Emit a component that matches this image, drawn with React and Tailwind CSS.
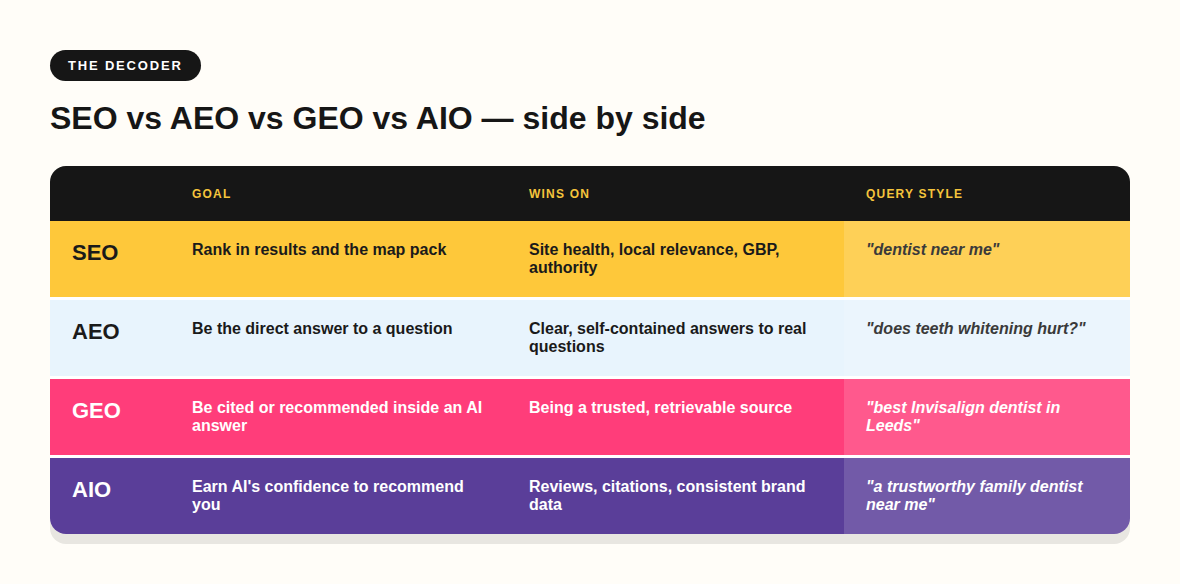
import React from 'react'

// ─── Rows of the decoder table ────────────────────────────────────────────────
const ROWS = [
  {
    label: 'SEO',
    goal: 'Rank in results and the map pack',
    wins: 'Site health, local relevance, GBP, authority',
    query: '"dentist near me"',
    bg: 'bg-[#fec83a]',
    text: 'text-[#1a1a1a]',
    queryText: 'text-[#3a3a3a]',
  },
  {
    label: 'AEO',
    goal: 'Be the direct answer to a question',
    wins: 'Clear, self-contained answers to real questions',
    query: '"does teeth whitening hurt?"',
    bg: 'bg-[#e8f4fd]',
    text: 'text-[#1a1a1a]',
    queryText: 'text-[#3a3a3a]',
  },
  {
    label: 'GEO',
    goal: 'Be cited or recommended inside an AI answer',
    wins: 'Being a trusted, retrievable source',
    query: '"best Invisalign dentist in Leeds"',
    bg: 'bg-[#ff3d7a]',
    text: 'text-white',
    queryText: 'text-white',
  },
  {
    label: 'AIO',
    goal: "Earn AI's confidence to recommend you",
    wins: 'Reviews, citations, consistent brand data',
    query: '"a trustworthy family dentist near me"',
    bg: 'bg-[#5a3e99]',
    text: 'text-white',
    queryText: 'text-white',
  },
]

const COLS = 'grid grid-cols-[120px_337px_337px_1fr]'

const Row = ({ row, first }) => (
  <div className={`${COLS} ${row.bg} ${row.text} ${first ? '' : 'border-t-[3px] border-white'}`}>
    <div className="pl-[22px] pt-[19px] pb-[20px] text-[22px] font-bold leading-[26px]">{row.label}</div>
    <div className="px-[22px] pt-[20px] pb-[20px] text-base font-bold leading-[18px]">{row.goal}</div>
    <div className="px-[22px] pt-[20px] pb-[20px] text-base font-bold leading-[18px]">{row.wins}</div>
    <div className={`bg-white/15 pl-[22px] pr-[40px] pt-[20px] pb-[20px] text-base font-bold italic leading-[18px] ${row.queryText}`}>
      {row.query}
    </div>
  </div>
)

const App = () => (
  <div className="min-h-[584px] bg-[#fffdf8] px-[50px] pt-[50px] font-['Liberation_Sans',Arial,sans-serif] text-[#161616]">
    <div className="inline-flex h-[31px] items-center rounded-full bg-[#161616] px-[18px] text-[13px] font-bold tracking-[0.14em] text-white">
      THE DECODER
    </div>
    <h1 className="mt-[17px] text-[32px] font-bold leading-[40px] text-[#161616]">
      SEO vs AEO vs GEO vs AIO — side by side
    </h1>

    <div className="mt-[28px] overflow-hidden rounded-[16px] shadow-[0_10px_0_#e8e6e1]">
      <div className={`${COLS} h-[55px] items-center bg-[#161616] text-[12px] font-bold tracking-[0.1em] text-[#f5c43c]`}>
        <div />
        <div className="px-[22px]">GOAL</div>
        <div className="px-[22px]">WINS ON</div>
        <div className="px-[22px]">QUERY STYLE</div>
      </div>
      {ROWS.map((r, i) => (
        <Row key={r.label} row={r} first={i === 0} />
      ))}
    </div>
  </div>
)

export default App
